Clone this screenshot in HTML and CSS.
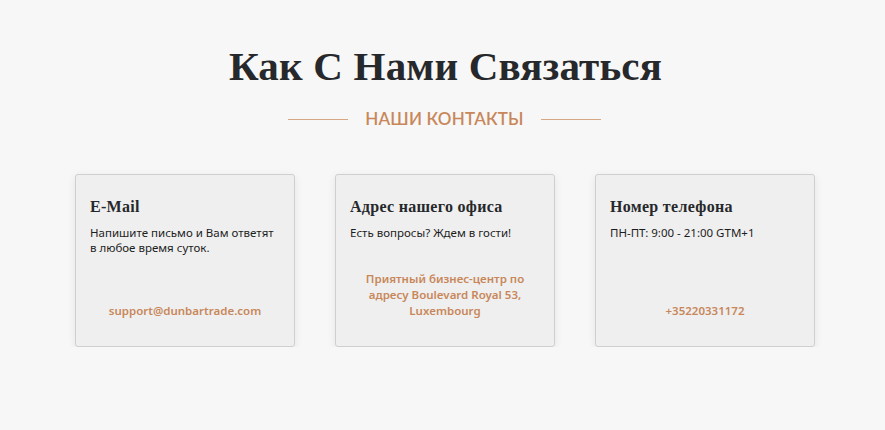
FILE: index.html
```html
<!DOCTYPE html>
<html lang="ru">
<head>
<meta charset="utf-8">
<title>Контакты</title>
<link rel="stylesheet" href="styles.css">
</head>
<body>
<section class="contacts">
  <h1 class="title">Как С Нами Связаться</h1>
  <div class="subtitle">
    <span class="rule"></span>
    <span class="subtitle-text">НАШИ КОНТАКТЫ</span>
    <span class="rule"></span>
  </div>
  <div class="cards">
    <div class="card">
      <h3 class="card-title">E-Mail</h3>
      <p class="card-text">Напишите письмо и Вам ответят в любое время суток.</p>
      <a class="card-link" href="#">support@dunbartrade.com</a>
    </div>
    <div class="card">
      <h3 class="card-title">Адрес нашего офиса</h3>
      <p class="card-text">Есть вопросы? Ждем в гости!</p>
      <a class="card-link" href="#">Приятный бизнес-центр по адресу Boulevard Royal 53, Luxembourg</a>
    </div>
    <div class="card">
      <h3 class="card-title">Номер телефона</h3>
      <p class="card-text">ПН-ПТ: 9:00 - 21:00 GTM+1</p>
      <a class="card-link" href="#">+35220331172</a>
    </div>
  </div>
</section>
</body>
</html>
```
FILE: styles.css
```css
html, body {
  margin: 0;
  padding: 0;
  background: #f7f7f7;
}
body {
  font-family: "Noto Sans", "Open Sans", sans-serif;
  color: #222;
}
.contacts {
  padding-top: 40px;
  display: flex;
  flex-direction: column;
  align-items: center;
}
.title {
  margin: 0;
  font-family: "Liberation Serif", "Times New Roman", serif;
  font-weight: bold;
  font-size: 41px;
  line-height: 52px;
  color: #26282b;
  letter-spacing: 0.2px;
  padding-left: 6px;
}
.subtitle {
  margin-top: 16px;
  display: flex;
  align-items: center;
  gap: 17px;
  padding-left: 4px;
}
.rule {
  width: 60px;
  height: 1px;
  background: #d7a684;
}
.subtitle-text {
  font-family: "Lato", "Noto Sans", sans-serif;
  font-weight: 600;
  font-size: 17px;
  line-height: 22px;
  color: #c8875a;
  letter-spacing: 0.2px;
}
.cards {
  margin-top: 44px;
  display: flex;
  gap: 40px;
  padding-left: 5px;
}
.card {
  width: 218px;
  height: 171px;
  background: #efefef;
  border: 1px solid #cfcfcf;
  border-radius: 3px;
  box-shadow: 0 2px 8px rgba(0, 0, 0, 0.08);
  display: flex;
  flex-direction: column;
}
.card-title {
  margin: 22px 14px 0;
  font-family: "Liberation Serif", "Times New Roman", serif;
  font-weight: bold;
  font-size: 16px;
  line-height: 19px;
  letter-spacing: 0.3px;
  color: #26282b;
}
.card-text {
  margin: 9px 14px 0;
  font-size: 11.5px;
  line-height: 15px;
  color: #1d1d1d;
}
.card-link {
  margin: auto 20px 27px;
  text-align: center;
  font-size: 11.5px;
  line-height: 16px;
  font-weight: 600;
  color: #c8875a;
  text-decoration: none;
}
```
